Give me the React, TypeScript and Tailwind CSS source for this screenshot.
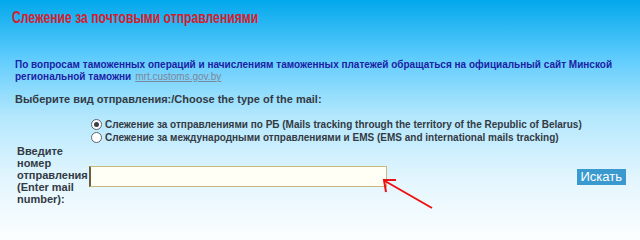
import React from 'react';

const App: React.FC = () => {
  return (
    <div className="relative w-[640px] h-[240px] overflow-hidden bg-[linear-gradient(to_bottom,#02a8ec_0%,#62cdfd_25%,#b2e7fc_48%,#e4f6fe_75%,#fbfeff_100%)] font-['Liberation_Sans',Arial,sans-serif]">
      <div className="pl-[12px] pt-[9px]">
        <div className="w-max origin-left scale-x-[0.76] text-[16px] font-bold leading-[18px] text-[#d4202e]">
          Слежение за почтовыми отправлениями
        </div>
      </div>

      <div className="pl-[15px] pt-[32px] pr-[20px] text-[10px] font-bold leading-[12px] text-[#1b22a4]">
        <p>
          По вопросам таможенных операций и начислениям таможенных платежей обращаться на официальный сайт Минской
        </p>
        <p className="flex gap-[4px]">
          <span>региональной таможни</span>
          <a href="#" className="font-normal text-[#7d8598] underline">mrt.customs.gov.by</a>
        </p>
      </div>

      <div className="pl-[15px] pt-[10px] text-[11px] font-bold leading-[12px] text-[#333a44]">
        Выберите вид отправления:/Choose the type of the mail:
      </div>

      <div className="pl-[91px] pt-[13px] flex flex-col text-[10px] font-bold leading-[13px] text-[#333a44]">
        <label className="flex items-center gap-[3px]">
          <span className="w-[11px] h-[11px] rounded-full border border-[#5d6470] bg-white flex items-center justify-center">
            <span className="w-[5px] h-[5px] rounded-full bg-[#3a3f48]" />
          </span>
          Слежение за отправлениями по РБ (Mails tracking through the territory of the Republic of Belarus)
        </label>
        <label className="flex items-center gap-[3px]">
          <span className="w-[11px] h-[11px] rounded-full border border-[#5d6470] bg-white" />
          Слежение за международными отправлениями и EMS (EMS and international mails tracking)
        </label>
      </div>

      <div className="flex items-center pl-[17px] pt-[1px]">
        <div className="w-[72px] text-[11px] font-bold leading-[12px] text-[#333a44]">
          Введите номер отправления (Enter mail number):
        </div>
        <input
          type="text"
          className="mt-[3px] w-[298px] h-[21px] bg-[#fffff6] border border-[#c9b97c] border-l-[2px] border-l-[#6b5f3a] outline-none"
        />
        <button className="mt-[4px] ml-auto mr-[14px] bg-[#3a9ad0] text-white text-[13px] leading-[16px] px-[4px] font-['Liberation_Sans',Arial,sans-serif]">
          Искать
        </button>
      </div>

      <svg className="absolute left-[380px] top-[176px]" width="60" height="36" viewBox="0 0 60 36">
        <line x1="52" y1="32" x2="5" y2="5" stroke="#ee1111" strokeWidth="2" />
        <polyline points="6,16 4,4 16,4" fill="none" stroke="#ee1111" strokeWidth="2" />
      </svg>
    </div>
  );
};

export default App;
